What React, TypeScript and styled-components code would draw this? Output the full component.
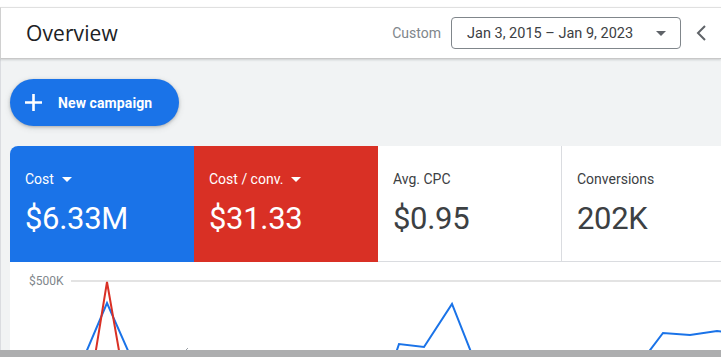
import React from "react";
import styled, { createGlobalStyle } from "styled-components";

const GlobalStyle = createGlobalStyle`
  html, body {
    margin: 0;
    padding: 0;
    background: #ffffff;
    overflow: hidden;
  }
  * {
    box-sizing: border-box;
  }
`;

const Page = styled.div`
  display: flex;
  flex-direction: column;
  width: 721px;
  height: 357px;
  padding-top: 7px;
  font-family: Roboto, "Liberation Sans", Arial, sans-serif;
  color: #3c4043;
  overflow: hidden;
`;

const Header = styled.header`
  display: flex;
  align-items: center;
  flex-shrink: 0;
  height: 52px;
  padding: 0 14px 0 25px;
  background: #ffffff;
  border-top: 1px solid #e0e0e0;
  border-left: 1px solid #d0d0d0;
  border-bottom: 1px solid #c8c8c8;
  box-shadow: 0 1px 2px rgba(60, 64, 67, 0.2);
  position: relative;
  z-index: 1;
`;

const Title = styled.h1`
  flex: 1;
  margin: 0;
  font-family: "Open Sans", Roboto, sans-serif;
  font-size: 21px;
  font-weight: 400;
  color: #202124;
  letter-spacing: 0.1px;
`;

const RangeLabel = styled.span`
  font-size: 14px;
  color: #80868b;
  margin-right: 10px;
`;

const DateSelect = styled.button`
  display: flex;
  align-items: center;
  justify-content: space-between;
  width: 230px;
  height: 32px;
  padding: 0 14px 0 15px;
  background: #ffffff;
  border: 1px solid #80868b;
  border-radius: 4px;
  font-family: Roboto, "Liberation Sans", sans-serif;
  font-size: 14.5px;
  color: #3c4043;
`;

const Caret = styled.span<{ $color: string }>`
  display: inline-block;
  width: 0;
  height: 0;
  border-left: 5px solid transparent;
  border-right: 5px solid transparent;
  border-top: 5px solid ${({ $color }) => $color};
`;

const BackButton = styled.span`
  display: flex;
  align-items: center;
  margin-left: 14px;
`;

const Content = styled.main`
  flex: 1;
  display: flex;
  flex-direction: column;
  gap: 20px;
  padding: 20px 0 0 9px;
  background: #f1f3f4;
  border-left: 1px solid #dadce0;
  overflow: hidden;
`;

const NewButton = styled.button`
  display: flex;
  align-items: center;
  gap: 16px;
  align-self: flex-start;
  width: 169px;
  height: 47px;
  padding: 0 0 0 15px;
  border: none;
  border-radius: 24px;
  background: #1a73e8;
  box-shadow: 0 1px 3px rgba(60, 64, 67, 0.3), 0 2px 6px rgba(60, 64, 67, 0.15);
  color: #ffffff;
  font-family: Roboto, "Liberation Sans", sans-serif;
  font-size: 14px;
  font-weight: 700;
  letter-spacing: 0.1px;
`;

const Panel = styled.section`
  flex: 1;
  display: flex;
  flex-direction: column;
  background: #ffffff;
  border-top-left-radius: 8px;
  overflow: hidden;
`;

const MetricRow = styled.div`
  display: flex;
  flex-shrink: 0;
  height: 116px;
`;

const Metric = styled.div<{ $bg: string; $active: boolean }>`
  display: flex;
  flex-direction: column;
  flex-shrink: 0;
  width: 184px;
  padding: 25px 15px 0;
  background: ${({ $bg }) => $bg};
  color: ${({ $active }) => ($active ? "#ffffff" : "#3c4043")};
  border-right: ${({ $active }) => ($active ? "none" : "1px solid #dadce0")};
  border-bottom: ${({ $active }) => ($active ? "none" : "1px solid #dadce0")};
`;

const MetricLabel = styled.div`
  display: flex;
  align-items: center;
  gap: 8px;
  height: 16px;
  font-size: 14px;
`;

const MetricValue = styled.div`
  margin-top: 14px;
  font-size: 31px;
  line-height: 36px;
  letter-spacing: -0.3px;
`;

const Chart = styled.div`
  flex: 1;
  position: relative;
  padding: 12px 0 0 19px;
`;

const AxisRow = styled.div`
  display: flex;
  align-items: center;
  gap: 7px;
`;

const AxisLabel = styled.span`
  font-size: 12px;
  color: #80868b;
`;

const GridLine = styled.div`
  flex: 1;
  height: 2px;
  background: #e3e3e3;
`;

const Lines = styled.svg`
  position: absolute;
  left: 0;
  top: 0;
`;

const Scrollbar = styled.div`
  flex-shrink: 0;
  height: 7px;
  background: #adaeaf;
`;

interface MetricData {
  label: string;
  value: string;
  bg: string;
  active: boolean;
}

const metrics: MetricData[] = [
  { label: "Cost", value: "$6.33M", bg: "#1a73e8", active: true },
  { label: "Cost / conv.", value: "$31.33", bg: "#d93025", active: true },
  { label: "Avg. CPC", value: "$0.95", bg: "#ffffff", active: false },
  { label: "Conversions", value: "202K", bg: "#ffffff", active: false },
];

const App: React.FC = () => {
  return (
    <Page>
      <GlobalStyle />
      <Header>
        <Title>Overview</Title>
        <RangeLabel>Custom</RangeLabel>
        <DateSelect>
          <span>Jan 3, 2015 – Jan 9, 2023</span>
          <Caret $color="#5f6368" />
        </DateSelect>
        <BackButton>
          <svg width="12" height="18" viewBox="0 0 12 18">
            <path d="M10 2 L3 9 L10 16" fill="none" stroke="#5f6368" strokeWidth="2" />
          </svg>
        </BackButton>
      </Header>
      <Content>
        <NewButton>
          <svg width="17" height="17" viewBox="0 0 17 17">
            <path d="M8.5 0 V17 M0 8.5 H17" stroke="#ffffff" strokeWidth="2.6" />
          </svg>
          New campaign
        </NewButton>
        <Panel>
          <MetricRow>
            {metrics.map((m) => (
              <Metric key={m.label} $bg={m.bg} $active={m.active}>
                <MetricLabel>
                  {m.label}
                  {m.active && <Caret $color="#ffffff" />}
                </MetricLabel>
                <MetricValue>{m.value}</MetricValue>
              </Metric>
            ))}
          </MetricRow>
          <Chart>
            <AxisRow>
              <AxisLabel>$500K</AxisLabel>
              <GridLine />
            </AxisRow>
            <Lines width="711" height="100" viewBox="0 0 711 100">
              <g fill="none" strokeWidth="2" strokeLinejoin="miter">
                <path d="M72 100 L97 41 L123 100" stroke="#1a73e8" />
                <path d="M84 100 L97 20 L111 100" stroke="#d93025" />
                <path d="M383 100 L389 82 L414 85 L442 42 L465 100" stroke="#1a73e8" />
                <path d="M631 100 L653 71 L680 73 L707 69 L715 70" stroke="#1a73e8" />
                <path d="M176 88 L178 86" stroke="#9aa0a6" strokeWidth="1" />
              </g>
            </Lines>
          </Chart>
        </Panel>
      </Content>
      <Scrollbar />
    </Page>
  );
};

export default App;
